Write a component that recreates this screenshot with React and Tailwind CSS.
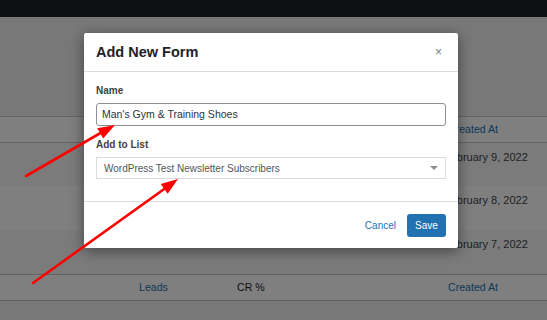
const rows = [
  { date: "February 9, 2022", striped: true, h: "h-[43px]" },
  { date: "February 8, 2022", striped: false, h: "h-[44px]" },
  { date: "February 7, 2022", striped: true, h: "h-[44px]" },
];

const TableHead = ({ border }) => (
  <div
    className={`grid grid-cols-[139px_98px_211px_1fr] items-center h-[27px] bg-white text-[10.6px] ${border}`}
  >
    <span />
    <span className="text-[#2271b1]">Leads</span>
    <span className="text-[#1d2327]">CR %</span>
    <span className="text-[#2271b1]">Created At</span>
  </div>
);

const Arrows = () => (
  // the red annotation arrows drawn on top of the screenshot
  <svg
    className="absolute inset-0 pointer-events-none"
    width="547"
    height="320"
    viewBox="0 0 547 320"
  >
    <line x1="26" y1="176" x2="104" y2="131" stroke="#ff0000" strokeWidth="2.6" strokeLinecap="round" />
    <polygon points="115,125 97.2,128.2 103.2,138.6" fill="#ff0000" />
    <line x1="33" y1="283" x2="167" y2="187" stroke="#ff0000" strokeWidth="2.6" strokeLinecap="round" />
    <polygon points="178,179 160.7,184 167.7,193.8" fill="#ff0000" />
  </svg>
);

export default function App() {
  return (
    <div className="relative w-[547px] h-[320px] overflow-hidden bg-[#f0f0f1] font-['Liberation_Sans',Arial,sans-serif]">
      <div className="h-[17px] bg-[#1d2327]" />
      <div className="h-[99px]" />

      <TableHead border="border-y border-[#c3c4c7]" />
      {rows.map((r) => (
        <div
          key={r.date}
          className={`grid grid-cols-[444px_1fr] pt-[7px] ${r.h} ${r.striped ? "bg-[#f6f7f7]" : "bg-white"}`}
        >
          <span />
          <span className="text-[11px] leading-[14px] text-[#3c434a]">{r.date}</span>
        </div>
      ))}
      <TableHead border="border-y border-[#c3c4c7]" />

      {/* modal backdrop */}
      <div className="absolute inset-0 bg-black/50 pl-[84px] pt-[33px]">
        <div className="w-[374px] h-[215px] bg-white rounded-[2px] shadow-[0_3px_14px_rgba(0,0,0,0.45)] flex flex-col">
          <div className="h-[39px] border-b border-[#dcdcde] flex items-center justify-between pl-[12px] pr-[16px]">
            <h2 className="text-[14.5px] font-bold text-[#1d2327] pt-[2px]">Add New Form</h2>
            <span className="text-[12px] leading-none text-[#787c82]">×</span>
          </div>

          <div className="flex flex-col px-[12px] pt-[12px] h-[130px] border-b border-[#dcdcde]">
            <label className="text-[10px] leading-[14px] font-semibold text-[#3c434a]">Name</label>
            <div className="mt-[5px] h-[23px] border border-[#8c8f94] rounded-[3px] flex items-center px-[5px] text-[10.5px] text-[#2c3338]">
              Man's Gym &amp; Training Shoes
            </div>
            <label className="mt-[12px] text-[10px] leading-[14px] font-semibold text-[#3c434a]">Add to List</label>
            <div className="mt-[5px] h-[22px] border border-[#dcdcde] flex items-center justify-between pl-[7px] pr-[7px] text-[10px] text-[#50575e]">
              <span>WordPress Test Newsletter Subscribers</span>
              <svg width="8" height="5" viewBox="0 0 8 5">
                <polygon points="0,0 8,0 4,4" fill="#8c8f94" />
              </svg>
            </div>
          </div>

          <div className="flex items-center justify-end gap-[11px] px-[12px] pt-[12px]">
            <button className="text-[10px] text-[#2271b1]">Cancel</button>
            <button className="w-[39px] h-[23px] rounded-[3px] bg-[#2271b1] text-white text-[10px] font-medium">
              Save
            </button>
          </div>
        </div>
      </div>

      <Arrows />
    </div>
  );
}
